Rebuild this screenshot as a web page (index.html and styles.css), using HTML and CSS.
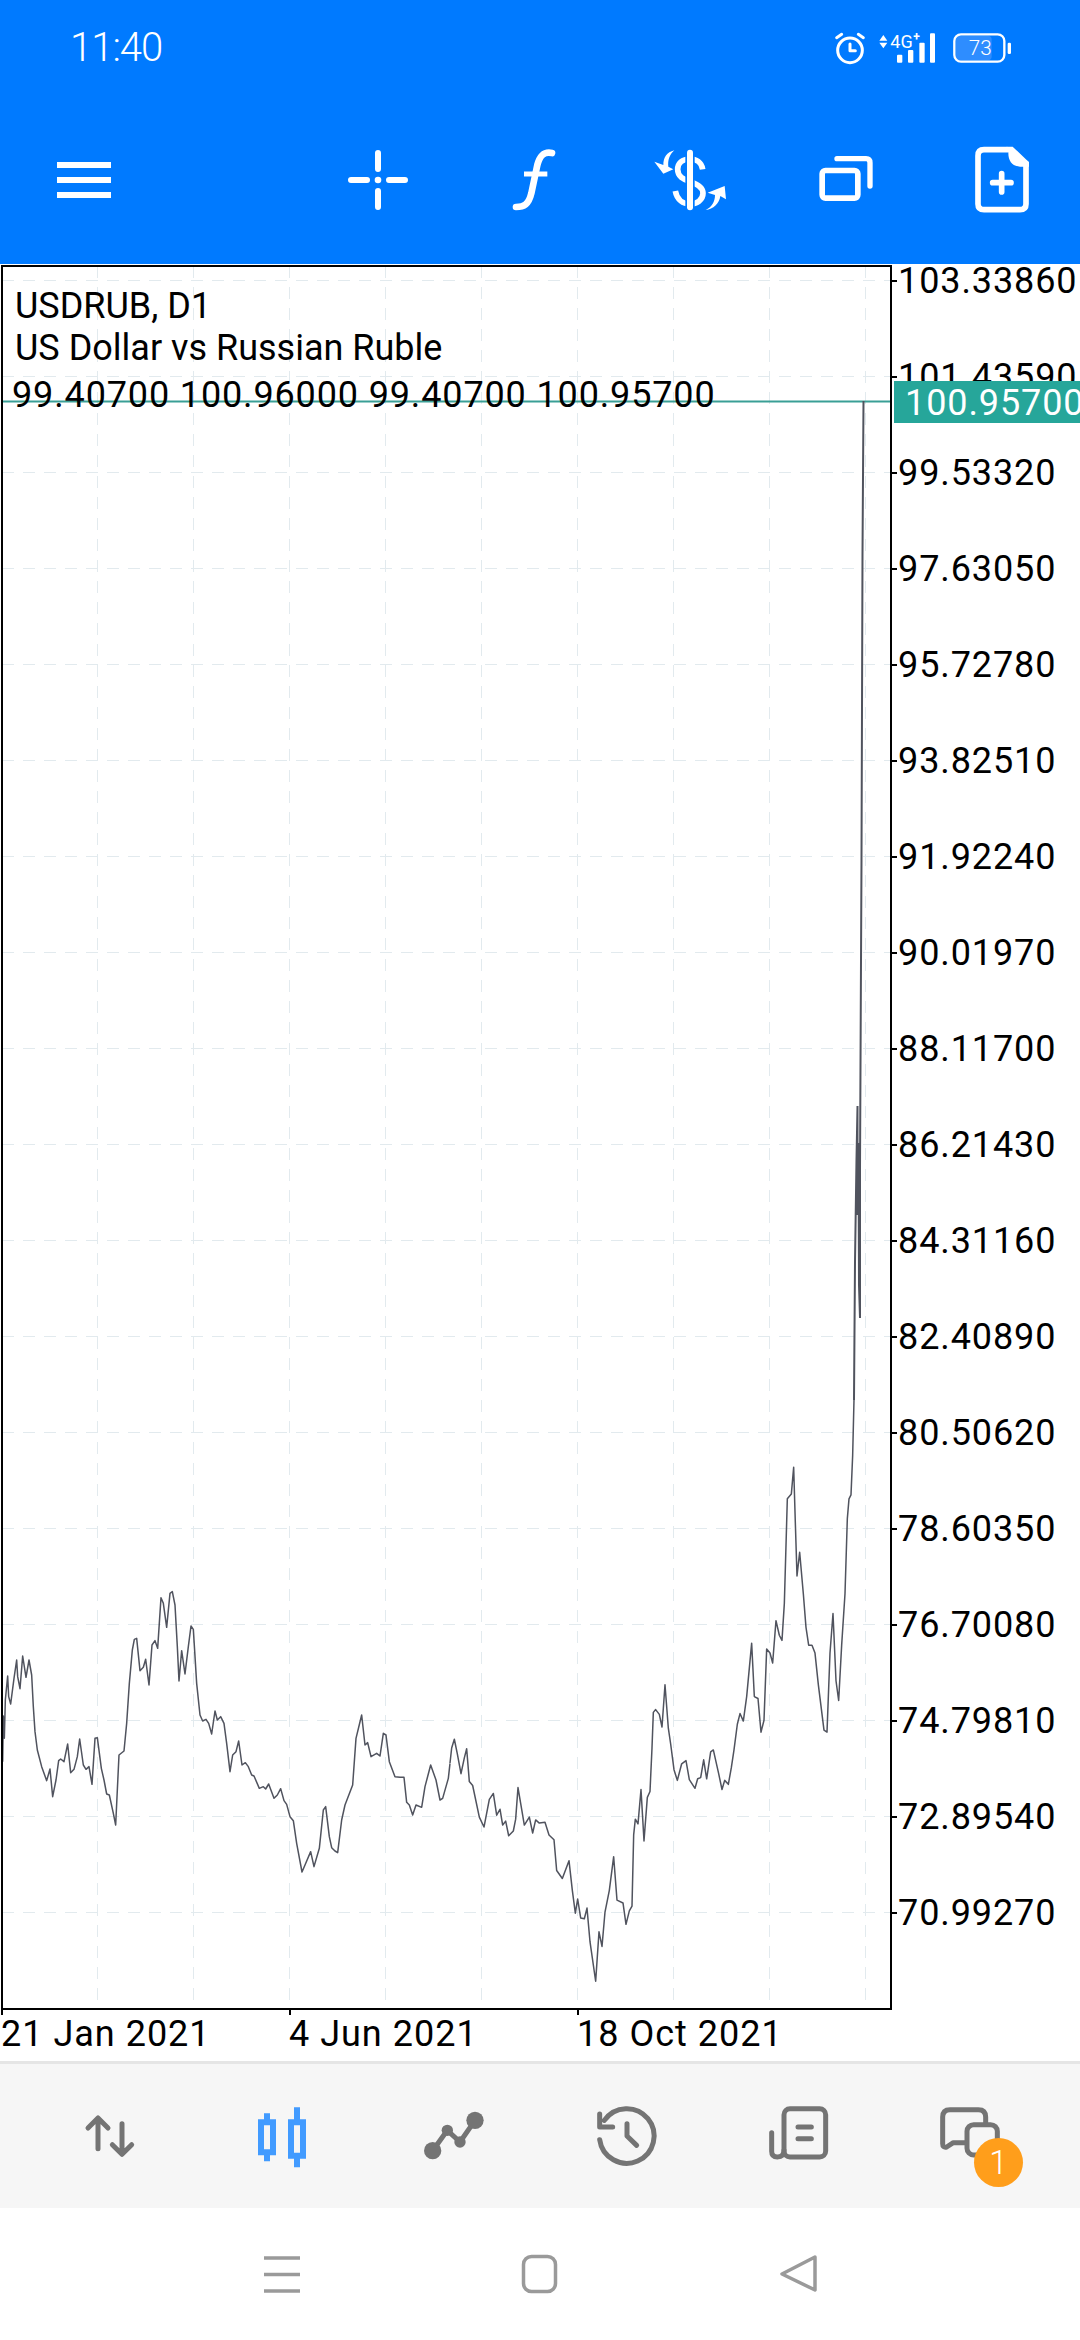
FILE: index.html
```html
<!DOCTYPE html>
<html lang="en">
<head>
<meta charset="utf-8">
<title>USDRUB, D1</title>
<link rel="stylesheet" href="styles.css">
</head>
<body>
<div class="page">
  <header class="header">
    <div class="status">
      <span class="clock">11:40</span>
      <svg class="status-icons" viewBox="0 0 600 180" aria-hidden="true">
        <g class="st-line">
          <circle cx="90" cy="91" r="37"/>
          <path d="M50 53L65 43M115 43L130 53M90 72V92H106"/>
        </g>
        <path class="st-fill" d="M190 45L202 62H178ZM178 68H202L190 85Z"/>
        <text class="st-net" x="211" y="85">4G</text>
        <text class="st-plus" x="280" y="62">+</text>
        <g class="st-fill">
          <rect x="231" y="104" width="16" height="24" rx="3"/>
          <rect x="264" y="90" width="16" height="38" rx="3"/>
          <rect x="298" y="68" width="16" height="60" rx="3"/>
          <rect x="330" y="40" width="15" height="88" rx="3"/>
        </g>
        <rect class="st-charge" x="408" y="47" width="107" height="74" rx="12"/>
        <rect class="st-batt" x="403" y="43" width="150" height="82" rx="20"/>
        <rect class="st-fill" x="563" y="68" width="10" height="34" rx="4"/>
        <text class="st-level" x="481" y="106">73</text>
      </svg>
    </div>
    <nav class="toolbar">
      <svg class="icon" viewBox="0 0 72 72" aria-hidden="true"><path class="w-bars" d="M9 21H63M9 36H63M9 51H63"/></svg>
      <div class="tools">
        <svg class="icon" viewBox="0 0 72 72" aria-hidden="true">
          <path class="w-line w6" d="M9 36H25M47 36H63M36 9V25M36 47V63"/>
          <circle class="w-fill" cx="36" cy="36" r="3.3"/>
        </svg>
        <svg class="icon" viewBox="534 42 216 216" aria-hidden="true">
          <path class="w-line w20" d="M696 69C672 64 660 76 652 105L634 190C626 224 612 231 588 231"/>
          <path class="w-line w15 butt" d="M612 132H682"/>
        </svg>
        <svg class="icon" viewBox="1002 42 216 216" aria-hidden="true">
          <path class="w-line w17 butt" d="M1148 118C1145 97 1128 87 1110 87C1087 87 1073 100 1073 118C1073 140 1090 148 1110 155C1135 163 1149 172 1149 190C1149 210 1130 222 1110 222C1090 222 1071 210 1066 183"/>
          <path class="b-line" d="M1110 60V240"/>
          <path class="w-line w18" d="M1110 68V232"/>
          <path class="w-fill" d="M1063 61C1040 67 1030 82 1030 105L1003 95L1030 131L1060 118L1045 110C1043 90 1048 75 1063 61Z"/>
          <path class="w-fill" d="M1157 240C1175 232 1185 215 1185 195L1163 188L1214 168L1218 208L1201 198C1198 220 1180 238 1157 240Z"/>
        </svg>
        <svg class="icon" viewBox="60 42 216 216" aria-hidden="true">
          <rect class="w-line w17" x="96.500" y="121.500" width="107" height="83" rx="10"/>
          <path class="w-line w16" d="M141 86H228Q240 86 240 98V168"/>
        </svg>
        <svg class="icon" viewBox="528 42 216 216" aria-hidden="true">
          <path class="w-line w17" d="M650 59H582Q564 59 564 77V222Q564 239 582 239H690Q708 239 708 222V100"/>
          <path class="w-fill" d="M650 50H668L717 97V110H690C668 108 655 95 655 68Z"/>
          <path class="w-line w17" d="M608 158H663M635 131V186"/>
        </svg>
      </div>
    </nav>
  </header>

  <main class="chart">
    <section class="plot">
      <svg class="plot-svg" viewBox="3 267 887 1741" aria-hidden="true">
        <g class="grid">
          <path d="M2 280.500H890M2 376.500H890M2 472.500H890M2 568.500H890M2 664.500H890M2 760.500H890M2 856.500H890M2 952.500H890M2 1048.500H890M2 1144.500H890M2 1240.500H890M2 1336.500H890M2 1432.500H890M2 1528.500H890M2 1624.500H890M2 1720.500H890M2 1816.500H890M2 1912.500H890"/>
          <path d="M97.500 266V2001M193.500 266V2001M289.500 266V2001M385.500 266V2001M481.500 266V2001M577.500 266V2001M673.500 266V2001M769.500 266V2001M865.500 266V2001"/>
        </g>
        <path class="price-line" d="M3 401.500H890"/>
        <g class="series" transform="translate(0 1550) scale(.33333)">
          <polyline points="8,635 10,498 13,565 16,450 23,378 26,440 32,462 42,385 50,330 53,380 60,416 68,318 78,382 87,330 95,375 100,470 105,545 112,600 125,650 140,692 150,657 158,740 168,690 176,632 182,627 192,635 203,582 212,668 222,658 232,620 239,567 250,645 258,658 267,650 276,703 285,565 292,563 304,655 312,690 320,732 328,735 340,790 347,825 352,720 357,615 372,603 380,520 388,400 397,300 403,268 410,265 420,362 430,352 437,328 447,405 456,285 465,272 473,295 483,143 490,160 500,232 510,130 517,125 525,165 532,290 537,393 545,302 555,372 565,290 573,228 580,238 590,400 600,495 608,513 618,508 626,520 635,552 645,483 652,510 662,500 672,520 680,580 690,665 698,615 708,605 716,573 726,645 736,638 745,650 755,675 762,678 778,715 790,710 797,717 806,702 822,745 832,735 842,716 852,752 860,763 870,800 880,812 890,880 906,966 915,945 932,905 942,950 958,895 970,780 977,770 988,860 995,893 1005,903 1013,908 1025,810 1035,765 1058,705 1068,565 1085,495 1095,585 1103,578 1113,620 1130,610 1140,618 1150,550 1158,555 1168,635 1185,680 1200,682 1212,682 1220,757 1228,765 1238,795 1248,765 1265,772 1275,710 1292,645 1308,690 1320,750 1328,745 1345,685 1350,640"/>
        </g>
        <g class="series" transform="translate(450 1400) scale(.33333 .39541)">
          <polyline points="0,918 5,880 13,858 22,895 33,945 43,905 50,882 58,965 68,975 88,1055 102,1080 118,1010 130,995 140,1050 150,1035 158,1075 167,1065 176,1102 190,1090 197,1060 204,980 212,1020 223,1075 238,1055 248,1095 257,1062 268,1070 285,1068 297,1100 312,1112 320,1190 337,1210 357,1165 367,1240 376,1298 383,1262 392,1310 403,1312 411,1285 420,1370 437,1470 447,1345 456,1382 465,1295 478,1240 491,1155 501,1265 519,1272 528,1326 538,1292 546,1280 551,1100 556,1060 564,1072 573,985 582,1115 592,1005 600,990 606,880 610,790 617,783 628,795 636,827 645,720 655,830 662,870 672,935 682,962 695,920 708,912 718,960 735,982 743,958 752,955 761,910 770,958 782,890 790,885 806,945 816,985 824,962 835,972 844,930 852,885 862,820 870,793 880,812 890,750 905,615 913,750 924,755 933,840 942,810 950,630 960,640 968,665 978,558 988,595 996,608 1003,515 1012,250 1024,238 1031,170 1036,310 1041,445 1049,385 1060,490 1068,575 1076,620 1086,620 1095,640 1105,720 1122,835 1131,840 1140,640 1149,540 1158,710 1166,760 1175,620 1185,490 1192,300 1197,250 1203,240 1208,140 1212,0"/>
        </g>
        <g class="series spike">
          <polyline points="854,1400 855,1262 856.500,1159 857.500,1106 857.500,1215 858.500,1143 859,1285 860,1318 860,1167 861.500,860 862.500,554 863.500,401"/>
        </g>
      </svg>
      <div class="legend">
        <div class="legend-line">USDRUB, D1</div>
        <div class="legend-line">US Dollar vs Russian Ruble</div>
        <div class="ohlc">99.40700 100.96000 99.40700 100.95700</div>
      </div>
    </section>
    <aside class="axis">
      <div class="tick">103.33860</div>
      <div class="tick">101.43590</div>
      <div class="tick">99.53320</div>
      <div class="tick">97.63050</div>
      <div class="tick">95.72780</div>
      <div class="tick">93.82510</div>
      <div class="tick">91.92240</div>
      <div class="tick">90.01970</div>
      <div class="tick">88.11700</div>
      <div class="tick">86.21430</div>
      <div class="tick">84.31160</div>
      <div class="tick">82.40890</div>
      <div class="tick">80.50620</div>
      <div class="tick">78.60350</div>
      <div class="tick">76.70080</div>
      <div class="tick">74.79810</div>
      <div class="tick">72.89540</div>
      <div class="tick">70.99270</div>
      <div class="price-tag">100.95700</div>
    </aside>
  </main>

  <div class="time-axis">
    <div class="time">21 Jan 2021</div>
    <div class="time">4 Jun 2021</div>
    <div class="time">18 Oct 2021</div>
  </div>

  <nav class="tabs">
    <svg class="icon" viewBox="42 30 216 216" aria-hidden="true">
      <path class="g-line" d="M114 170V80M84 108L114 78L144 108M186 95V185M157 158L186 187L215 158"/>
    </svg>
    <svg class="icon" viewBox="558 30 216 216" aria-hidden="true">
      <path class="candle" fill-rule="evenodd" d="M612 64H630V82H648V190H630V208H612V190H594V82H612ZM612 100V172H630V100Z"/>
      <path class="candle" fill-rule="evenodd" d="M702 46H720V82H738V200H720V226H702V200H684V82H702ZM702 100V182H720V100Z"/>
    </svg>
    <svg class="icon" viewBox="1074 30 216 216" aria-hidden="true">
      <path class="g-line" d="M1118 176L1162 115L1200 150L1245 85"/>
      <circle class="g-fill" cx="1118" cy="176" r="26"/>
      <circle class="g-fill" cx="1162" cy="115" r="17"/>
      <circle class="g-fill" cx="1200" cy="150" r="17"/>
      <circle class="g-fill" cx="1245" cy="85" r="26"/>
    </svg>
    <svg class="icon" viewBox="57 30 216 216" aria-hidden="true">
      <path class="g-line" d="M86 66V105H125M100 85A82 82 0 1 1 86 143M168 95V132L197 160"/>
    </svg>
    <svg class="icon" viewBox="574 30 216 216" aria-hidden="true">
      <rect class="g-line" x="640" y="50" width="125" height="145" rx="18"/>
      <path class="g-line" d="M603 122V178Q603 195 620 195Q640 195 640 175M682 105H722M682 140H722"/>
    </svg>
    <div class="chat">
      <svg class="icon" viewBox="1092 30 216 216" aria-hidden="true">
        <path class="g-line" d="M1247 92V75Q1247 53 1225 53H1140Q1118 53 1118 75V155Q1118 168 1130 165L1150 152H1185"/>
        <rect class="g-line" x="1191" y="98" width="91" height="91" rx="20"/>
      </svg>
      <span class="badge">1</span>
    </div>
  </nav>

  <nav class="sysnav">
    <svg class="nav-icon" viewBox="0 0 40 40" aria-hidden="true"><path class="n-line butt" d="M2 4H38M2 20.500H38M2 37H38"/></svg>
    <svg class="nav-icon" viewBox="0 0 40 40" aria-hidden="true"><rect class="n-line" x="3.500" y="2.500" width="32" height="35" rx="8"/></svg>
    <svg class="nav-icon" viewBox="0 0 40 40" aria-hidden="true"><path class="n-line" d="M37 3L4 20L37 36Z"/></svg>
  </nav>
</div>
</body>
</html>
```

FILE: styles.css
```css
* { box-sizing: border-box; }
html, body { margin: 0; padding: 0; background: #fff; }
body { font-family: Roboto, "Liberation Sans", sans-serif; color: #000; }
.page { width: 1080px; height: 2340px; overflow: hidden; display: flex; flex-direction: column; }

/* Header */
.header { height: 264px; flex: none; background: #007aff; color: #fff; }
.status { height: 96px; display: flex; justify-content: space-between; align-items: flex-start; padding: 20px 60px 0 70px; }
.clock { font-size: 40px; font-weight: 300; line-height: 56px; letter-spacing: -1px; }
.status-icons { width: 200px; height: 60px; display: block; }
.st-line { fill: none; stroke: #fff; stroke-width: 9; stroke-linecap: round; stroke-linejoin: round; }
.st-fill { fill: #fff; }
.st-net { font-size: 54px; fill: #fff; }
.st-plus { font-size: 36px; font-weight: 700; fill: #fff; }
.st-level { font-size: 62px; font-weight: 300; fill: #fff; text-anchor: middle; }
.st-charge { fill: #2e8dff; }
.st-batt { fill: none; stroke: #fff; stroke-width: 7; }

.toolbar { height: 168px; display: flex; align-items: center; padding: 0 42px 0 48px; }
.tools { margin-left: auto; display: flex; gap: 84px; }
.icon { width: 72px; height: 72px; display: block; flex: none; }
.w-bars { fill: none; stroke: #fff; stroke-width: 6; }
.w-line { fill: none; stroke: #fff; stroke-linecap: round; stroke-linejoin: round; }
.w-line.butt { stroke-linecap: butt; }
.w6 { stroke-width: 6; }
.w15 { stroke-width: 15; }
.w16 { stroke-width: 16; }
.w17 { stroke-width: 17; }
.w18 { stroke-width: 18; }
.w20 { stroke-width: 20; }
.w-fill { fill: #fff; }
.b-line { fill: none; stroke: #007aff; stroke-width: 28; }

/* Chart */
.chart { flex: none; height: 1746px; padding-top: 1px; display: flex; }
.plot { position: relative; width: 891px; height: 1745px; margin-left: 1px; border: 2px solid #000; flex: none; background: #fff; }
.plot-svg { display: block; width: 887px; height: 1741px; }
.grid path { fill: none; stroke: #e2eaee; stroke-width: 1; stroke-dasharray: 12 9; }
.price-line { fill: none; stroke: #3a9f96; stroke-width: 2; }
.series polyline { fill: none; stroke: #50535e; stroke-width: 1.500; stroke-linejoin: round; vector-effect: non-scaling-stroke; }
.spike polyline { stroke-width: 2; stroke-linejoin: miter; }

.legend { position: absolute; left: 9px; top: 18px; font-size: 36px; line-height: 42px; white-space: nowrap; }
.legend-line { padding-left: 3px; }
.ohlc { margin-top: 5px; letter-spacing: .86px; }

.axis { position: relative; flex: 1; min-width: 0; display: flex; flex-direction: column; gap: 66px; font-size: 36px; letter-spacing: .9px; }
.tick { height: 30px; flex: none; line-height: 32px; display: flex; align-items: flex-start; white-space: nowrap; }
.tick::before { content: ""; width: 5px; height: 1.500px; background: #000; margin: 15px 1px 0 0; flex: none; }
.price-tag { position: absolute; left: 2px; right: 0; top: 116px; height: 42px; background: #26a69a; color: #fff; line-height: 44px; padding-left: 11px; white-space: nowrap; }

/* Time axis */
.time-axis { flex: none; height: 51px; padding-left: 1px; display: flex; font-size: 36px; letter-spacing: 1px; }
.time { width: 288px; white-space: nowrap; line-height: 38px; }
.time::before { content: ""; display: block; width: 2px; height: 5px; background: #000; }

/* Tabs */
.tabs { flex: none; height: 147px; padding: 3px 24px 0; border-top: 3px solid #e5e5e5; background: #f6f6f6; display: grid; grid-template-columns: repeat(6, 172px); align-items: center; justify-items: center; }
.g-line { fill: none; stroke: #747474; stroke-width: 15; stroke-linecap: round; stroke-linejoin: round; }
.g-fill { fill: #747474; }
.candle { fill: #429bff; }
.chat { position: relative; width: 72px; height: 72px; }
.badge { position: absolute; left: 40px; top: 36px; width: 49px; height: 49px; border-radius: 50%; background: #ff9e1b; color: #fff; font-size: 33px; font-weight: 300; line-height: 49px; text-align: center; }

/* System navigation */
.sysnav { flex: 1; display: flex; justify-content: center; align-items: center; gap: 218px; }
.nav-icon { width: 40px; height: 40px; display: block; }
.n-line { fill: none; stroke: #9a9a9a; stroke-width: 3.500; stroke-linejoin: round; }
```
